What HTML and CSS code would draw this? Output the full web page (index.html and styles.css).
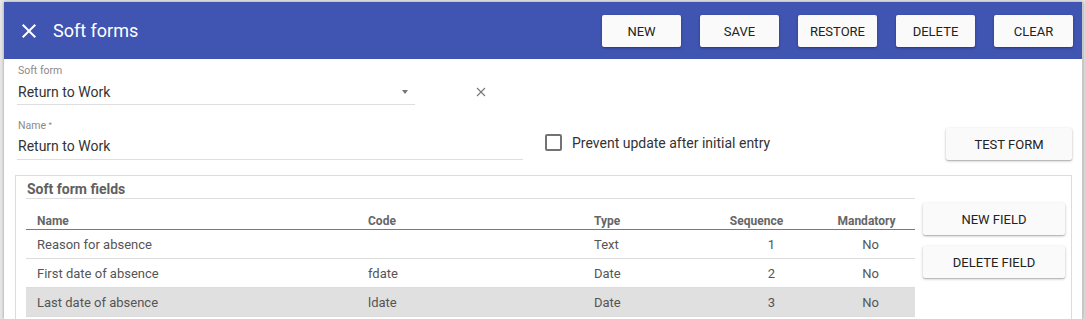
FILE: index.html
```html
<!DOCTYPE html>
<html>
<head>
<meta charset="utf-8">
<link rel="stylesheet" href="styles.css">
</head>
<body>
<div class="dialog">
  <header class="topbar">
    <svg class="close-icon" viewBox="0 0 24 24" width="24" height="24"><path d="M19 6.41L17.59 5 12 10.59 6.41 5 5 6.41 10.59 12 5 17.59 6.41 19 12 13.41 17.59 19 19 17.59 13.41 12z" fill="#fff"/></svg>
    <h1 class="title">Soft forms</h1>
    <div class="actions">
      <button class="btn">NEW</button>
      <button class="btn">SAVE</button>
      <button class="btn">RESTORE</button>
      <button class="btn">DELETE</button>
      <button class="btn">CLEAR</button>
    </div>
  </header>
  <main class="content">
    <div class="row row-select">
      <div class="field field-select">
        <div class="label">Soft form</div>
        <div class="value-line">
          <span class="value">Return to Work</span>
          <span class="caret"></span>
        </div>
      </div>
      <svg class="clear-x" viewBox="0 0 10 10" width="10" height="10"><path d="M1 1L9 9M9 1L1 9" stroke="#777" stroke-width="1.1" fill="none"/></svg>
    </div>
    <div class="row row-name">
      <div class="field field-name">
        <div class="label">Name <span class="req">*</span></div>
        <div class="value-line">
          <span class="value">Return to Work</span>
        </div>
      </div>
      <label class="check">
        <span class="box"></span>
        <span class="check-text">Prevent update after initial entry</span>
      </label>
      <button class="btn btn-test">TEST FORM</button>
    </div>
    <section class="panel">
      <div class="panel-main">
        <div class="panel-title">Soft form fields</div>
        <table class="grid">
          <colgroup>
            <col class="c-name"><col class="c-code"><col class="c-type"><col class="c-seq"><col class="c-mand">
          </colgroup>
          <thead>
            <tr>
              <th class="first">Name</th>
              <th>Code</th>
              <th>Type</th>
              <th class="seq">Sequence</th>
              <th class="mand">Mandatory</th>
            </tr>
          </thead>
          <tbody>
            <tr>
              <td class="first">Reason for absence</td>
              <td></td>
              <td>Text</td>
              <td class="seq">1</td>
              <td class="mand">No</td>
            </tr>
            <tr>
              <td class="first">First date of absence</td>
              <td>fdate</td>
              <td>Date</td>
              <td class="seq">2</td>
              <td class="mand">No</td>
            </tr>
            <tr class="selected">
              <td class="first">Last date of absence</td>
              <td>ldate</td>
              <td>Date</td>
              <td class="seq">3</td>
              <td class="mand">No</td>
            </tr>
          </tbody>
        </table>
      </div>
      <div class="panel-side">
        <button class="btn btn-side">NEW FIELD</button>
        <button class="btn btn-side">DELETE FIELD</button>
      </div>
    </section>
  </main>
</div>
</body>
</html>
```

FILE: styles.css
```css
* { box-sizing: border-box; }

html, body {
  margin: 0;
  height: 100%;
}

body {
  background: #e6e6e6;
  padding: 2px 2px 0 4px;
  font-family: Roboto, "Liberation Sans", Arial, sans-serif;
  overflow: hidden;
}

.dialog {
  width: 1079px;
  height: 100%;
  background: #fff;
  box-shadow: 0 0 3px rgba(0, 0, 0, 0.35);
  border-right: 1px solid #c8c8c8;
}

.topbar {
  height: 57px;
  background: #3f55b1;
  display: flex;
  align-items: center;
  padding: 0 9px 0 13px;
}

.close-icon {
  flex: none;
  display: block;
}

.title {
  margin: 0 0 0 12px;
  font-size: 18px;
  font-weight: 400;
  color: #fff;
  line-height: 24px;
}

.actions {
  margin-left: auto;
  display: flex;
  gap: 19px;
  padding-top: 1px;
}

.btn {
  font-family: Roboto, "Liberation Sans", Arial, sans-serif;
  font-size: 13px;
  color: #222;
  background: #fafafa;
  border: none;
  border-radius: 2px;
  height: 32px;
  width: 79px;
  padding: 0;
  box-shadow: 0 1px 3px rgba(0, 0, 0, 0.25), 0 1px 1px rgba(0, 0, 0, 0.14);
  cursor: pointer;
}

.content {
  padding: 6px 10px 0 13px;
}

.row {
  display: flex;
  align-items: flex-end;
}

.field {
  flex: none;
}

.field-select { width: 398px; }
.field-name { width: 506px; }

.label {
  font-size: 10.5px;
  line-height: 12px;
  color: #8a8a8a;
  padding-left: 1px;
}

.req {
  font-size: 8px;
  vertical-align: top;
  position: relative;
  top: -1px;
}

.value-line {
  display: flex;
  align-items: center;
  height: 23px;
  margin-top: 5px;
  border-bottom: 1px solid #dedede;
  padding: 0 7px 2px 1px;
}

.value {
  flex: 1;
  font-size: 14px;
  line-height: 20px;
  color: #333;
}

.caret {
  width: 0;
  height: 0;
  border-left: 3.5px solid transparent;
  border-right: 3.5px solid transparent;
  border-top: 4px solid #757575;
  margin-top: -1px;
}

.clear-x {
  flex: none;
  margin: 0 0 8px 61px;
  display: block;
}

.row-name {
  margin-top: 15px;
  align-items: center;
}

.row-name .value-line {
  margin-top: 4px;
  padding-bottom: 3px;
  height: 24px;
}

.check {
  display: flex;
  align-items: center;
  margin-left: 22px;
  margin-top: 5px;
}

.box {
  width: 17px;
  height: 17px;
  border: 2px solid #737373;
  border-radius: 2px;
  flex: none;
}

.check-text {
  margin-left: 10px;
  font-size: 14px;
  color: #333;
}

.btn-test {
  margin-left: auto;
  width: 126px;
  margin-top: 8px;
}

.panel {
  margin: 15px 0 0 -2px;
  border: 1px solid #dcdcdc;
  display: flex;
  padding: 0 7px 0 10px;
  height: 200px;
}

.panel-main {
  width: 889px;
  flex: none;
}

.panel-title {
  font-size: 14px;
  font-weight: 700;
  color: #616161;
  line-height: 17px;
  padding: 5px 0 0 1px;
  border-bottom: 1px solid #dedede;
}

.grid {
  width: 889px;
  table-layout: fixed;
  border-collapse: collapse;
}

.c-name { width: 332px; }
.c-code { width: 226px; }
.c-type { width: 121px; }
.c-seq { width: 121px; }
.c-mand { width: 89px; }

.grid th {
  font-size: 12px;
  font-weight: 700;
  color: #666;
  text-align: left;
  padding: 14px 10px 0 10px;
  line-height: 16px;
  border-bottom: 1px solid #7a7a7a;
}

.grid td {
  font-size: 13px;
  color: #555;
  height: 29px;
  padding: 0 10px;
  border-bottom: 1px solid #dcdcdc;
}

.grid .first { padding-left: 11px; }

.grid th.seq { text-align: center; padding-right: 28px; }
.grid td.seq { text-align: center; padding-left: 22px; }
.grid th.mand { text-align: center; padding-left: 2px; padding-right: 10px; }
.grid td.mand { text-align: center; padding-left: 0; padding-right: 0; }

.grid tr.selected td {
  background: #e0e0e0;
}

.panel-side {
  margin-left: 8px;
  padding-top: 27px;
  display: flex;
  flex-direction: column;
  gap: 11px;
}

.btn-side {
  width: 142px;
}
```
